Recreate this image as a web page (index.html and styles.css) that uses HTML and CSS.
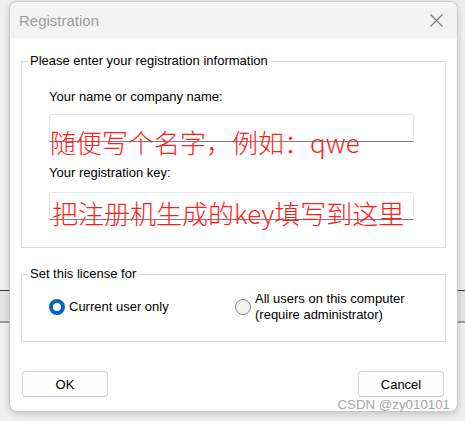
FILE: index.html
```html
<!DOCTYPE html>
<html lang="en">
<head>
<meta charset="utf-8">
<title>Registration</title>
<link rel="stylesheet" href="styles.css">
</head>
<body>
<div class="desk">
  <div class="backdrop-band"></div>
  <div class="window">
    <div class="titlebar">
      <span class="title">Registration</span>
      <svg class="close" width="13" height="13" viewBox="0 0 13 13" aria-hidden="true">
        <path d="M0.5 0.5 L12.5 12.5 M12.5 0.5 L0.5 12.5" stroke="#7a7a7a" stroke-width="1.1" fill="none"/>
      </svg>
    </div>
    <div class="content">
      <fieldset class="group group-info">
        <legend>Please enter your registration information</legend>
        <div class="field-label">Your name or company name:</div>
        <div class="input"><span class="note note-name">随便写个名字，例如：qwe</span></div>
        <div class="field-label label-key">Your registration key:</div>
        <div class="input input-key"><span class="note note-key">把注册机生成的key填写到这里</span></div>
      </fieldset>
      <fieldset class="group group-license">
        <legend>Set this license for</legend>
        <div class="radios">
          <div class="radio checked"><span class="radio-dot"></span><span class="radio-text">Current user only</span></div>
          <div class="radio"><span class="radio-dot"></span><span class="radio-text">All users on this computer<br>(require administrator)</span></div>
        </div>
      </fieldset>
      <div class="buttons">
        <button class="btn">OK</button>
        <button class="btn">Cancel</button>
      </div>
    </div>
  </div>
  <div class="watermark">CSDN @zy010101</div>
</div>
</body>
</html>
```

FILE: styles.css
```css
html, body {
  margin: 0;
  padding: 0;
}
body {
  width: 465px;
  height: 421px;
  overflow: hidden;
  background: #efefef;
  font-family: "Liberation Sans", Arial, sans-serif;
  font-size: 13px;
  color: #000;
}
.desk {
  position: relative;
  width: 465px;
  height: 421px;
  padding-top: 1px;
  box-sizing: border-box;
}
.backdrop-band {
  position: absolute;
  left: 0;
  right: 0;
  top: 290px;
  height: 33px;
  box-sizing: border-box;
  border-top: 1px solid #3a3a3a;
  border-bottom: 2px solid #9a9a9a;
  background: #e4e4e4;
}
.window {
  position: relative;
  margin-left: 9px;
  width: 449px;
  height: 411px;
  box-sizing: border-box;
  border: 1px solid #c9c9c9;
  border-radius: 8px;
  background: #fff;
  overflow: hidden;
  box-shadow: 0 2px 7px rgba(0, 0, 0, 0.18);
}
.titlebar {
  height: 36px;
  background: #f3f3f3;
  display: flex;
  align-items: center;
  justify-content: space-between;
  padding: 0 14px 0 9px;
}
.title {
  font-size: 15px;
  color: #9b9b9b;
}
.close {
  display: block;
  margin-top: 1px;
}
.content {
  padding: 0 11px;
}
.group {
  margin: 0;
  border: 1px solid #dcdcdc;
  min-width: 0;
}
.group legend {
  margin-left: -21px;
  padding: 0 2px;
  line-height: 16px;
  font-size: 13px;
}
.group-info {
  margin-top: 15px;
  padding: 20px 31px 27px 27px;
}
.field-label {
  line-height: 16px;
}
.label-key {
  margin-top: 23px;
}
.input {
  position: relative;
  margin-top: 9px;
  height: 28px;
  box-sizing: border-box;
  border: 1px solid #e6e6e6;
  border-bottom-color: #7c7c7c;
  border-radius: 3px 3px 0 0;
  background: #fff;
}
.input-key {
  margin-top: 11px;
}
.note {
  position: absolute;
  white-space: nowrap;
  color: #ff1c1c;
  font-family: "Noto Sans CJK SC", "Noto Sans", sans-serif;
  font-weight: 300;
  font-size: 26px;
  line-height: 1;
}
.note-name {
  left: 0;
  top: 14px;
}
.note-key {
  left: 2px;
  top: 7px;
}
.group-license {
  margin-top: 18px;
  padding: 9px 20px 18px 27px;
}
.radios {
  display: grid;
  grid-template-columns: 186px auto;
  align-items: center;
}
.radio {
  display: flex;
  align-items: center;
  gap: 4px;
}
.radio-text {
  line-height: 16px;
}
.radio-dot {
  width: 16px;
  height: 16px;
  box-sizing: border-box;
  border-radius: 50%;
  border: 1px solid #8a8a8a;
  background: #f3f3f3;
  flex: none;
}
.radio.checked .radio-dot {
  border: 4px solid #0067c0;
  background: #fff;
}
.buttons {
  margin-top: 29px;
  display: flex;
  justify-content: space-between;
  padding: 0 2px 0 1px;
}
.btn {
  width: 86px;
  height: 26px;
  box-sizing: border-box;
  border: 1px solid #d4d4d4;
  border-bottom-color: #c4c4c4;
  border-radius: 4px;
  background: #fdfdfd;
  font-family: "Liberation Sans", Arial, sans-serif;
  font-size: 13px;
  color: #000;
  padding: 0;
}
.watermark {
  position: absolute;
  right: 15px;
  top: 397px;
  font-family: "Liberation Sans", Arial, sans-serif;
  font-size: 13.3px;
  line-height: 16px;
  color: #a6a6a6;
}
```
